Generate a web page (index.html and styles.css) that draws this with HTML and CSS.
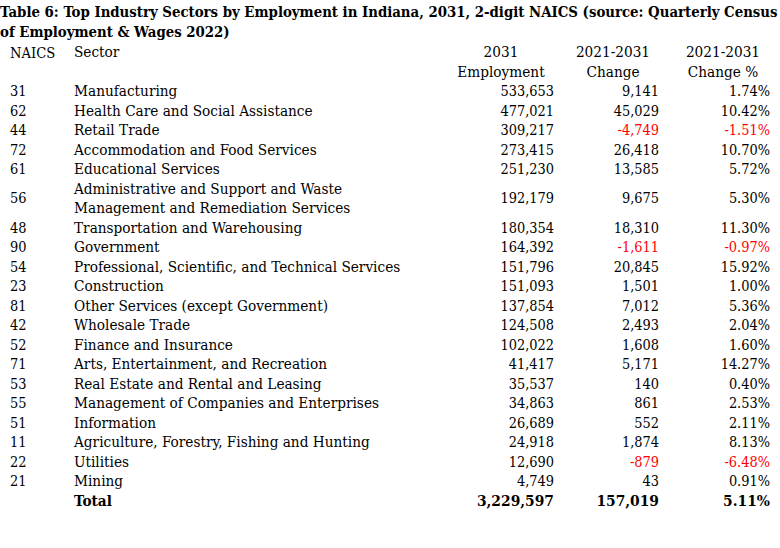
FILE: index.html
```html
<!DOCTYPE html>
<html>
<head>
<meta charset="utf-8">
<link rel="stylesheet" href="styles.css">
</head>
<body>
<div class="page">
<p class="caption"><span class="line">Table 6: Top Industry Sectors by Employment in Indiana, 2031, 2-digit NAICS (source: Quarterly Census</span> <span class="line">of Employment &amp; Wages 2022)</span></p>
<table class="data">
<colgroup>
<col class="c-code"><col class="c-sector"><col class="c-emp"><col class="c-chg"><col class="c-pct">
</colgroup>
<thead>
<tr><th class="code">NAICS</th><th class="sector">Sector</th><th class="num-h h-emp">2031<br>Employment</th><th class="num-h h-chg">2021-2031<br>Change</th><th class="num-h h-pct">2021-2031<br>Change %</th></tr>
</thead>
<tbody>
<tr><td class="code">31</td><td class="sector">Manufacturing</td><td class="num">533,653</td><td class="num">9,141</td><td class="num">1.74%</td></tr>
<tr><td class="code">62</td><td class="sector">Health Care and Social Assistance</td><td class="num">477,021</td><td class="num">45,029</td><td class="num">10.42%</td></tr>
<tr><td class="code">44</td><td class="sector">Retail Trade</td><td class="num">309,217</td><td class="num neg">-4,749</td><td class="num neg">-1.51%</td></tr>
<tr><td class="code">72</td><td class="sector">Accommodation and Food Services</td><td class="num">273,415</td><td class="num">26,418</td><td class="num">10.70%</td></tr>
<tr><td class="code">61</td><td class="sector">Educational Services</td><td class="num">251,230</td><td class="num">13,585</td><td class="num">5.72%</td></tr>
<tr><td class="code">56</td><td class="sector">Administrative and Support and Waste<br>Management and Remediation Services</td><td class="num">192,179</td><td class="num">9,675</td><td class="num">5.30%</td></tr>
<tr><td class="code">48</td><td class="sector">Transportation and Warehousing</td><td class="num">180,354</td><td class="num">18,310</td><td class="num">11.30%</td></tr>
<tr><td class="code">90</td><td class="sector">Government</td><td class="num">164,392</td><td class="num neg">-1,611</td><td class="num neg">-0.97%</td></tr>
<tr><td class="code">54</td><td class="sector">Professional, Scientific, and Technical Services</td><td class="num">151,796</td><td class="num">20,845</td><td class="num">15.92%</td></tr>
<tr><td class="code">23</td><td class="sector">Construction</td><td class="num">151,093</td><td class="num">1,501</td><td class="num">1.00%</td></tr>
<tr><td class="code">81</td><td class="sector">Other Services (except Government)</td><td class="num">137,854</td><td class="num">7,012</td><td class="num">5.36%</td></tr>
<tr><td class="code">42</td><td class="sector">Wholesale Trade</td><td class="num">124,508</td><td class="num">2,493</td><td class="num">2.04%</td></tr>
<tr><td class="code">52</td><td class="sector">Finance and Insurance</td><td class="num">102,022</td><td class="num">1,608</td><td class="num">1.60%</td></tr>
<tr><td class="code">71</td><td class="sector">Arts, Entertainment, and Recreation</td><td class="num">41,417</td><td class="num">5,171</td><td class="num">14.27%</td></tr>
<tr><td class="code">53</td><td class="sector">Real Estate and Rental and Leasing</td><td class="num">35,537</td><td class="num">140</td><td class="num">0.40%</td></tr>
<tr><td class="code">55</td><td class="sector">Management of Companies and Enterprises</td><td class="num">34,863</td><td class="num">861</td><td class="num">2.53%</td></tr>
<tr><td class="code">51</td><td class="sector">Information</td><td class="num">26,689</td><td class="num">552</td><td class="num">2.11%</td></tr>
<tr><td class="code">11</td><td class="sector">Agriculture, Forestry, Fishing and Hunting</td><td class="num">24,918</td><td class="num">1,874</td><td class="num">8.13%</td></tr>
<tr><td class="code">22</td><td class="sector">Utilities</td><td class="num">12,690</td><td class="num neg">-879</td><td class="num neg">-6.48%</td></tr>
<tr><td class="code">21</td><td class="sector">Mining</td><td class="num">4,749</td><td class="num">43</td><td class="num">0.91%</td></tr>
<tr class="total"><td class="code"></td><td class="sector">Total</td><td class="num">3,229,597</td><td class="num">157,019</td><td class="num">5.11%</td></tr>
</tbody>
</table>
</div>
</body>
</html>
```

FILE: styles.css
```css
html, body {
  margin: 0;
  padding: 0;
  background: #ffffff;
}
.page {
  width: 780px;
  font-family: "DejaVu Serif Condensed", "DejaVu Serif", serif;
  font-stretch: semi-condensed;
  color: #000000;
  padding-top: 2px;
}
.caption {
  margin: 0;
  font-weight: bold;
  font-size: 14.8px;
  line-height: 20px;
  white-space: nowrap;
}
.caption .line {
  display: block;
}
.data {
  border-collapse: collapse;
  table-layout: fixed;
  width: 770px;
  font-size: 15.2px;
  line-height: 19.5px;
  margin-top: 1px;
}
.c-code { width: 74px; }
.c-sector { width: 380px; }
.c-emp { width: 100px; }
.c-chg { width: 105px; }
.c-pct { width: 111px; }
.data th, .data td {
  padding: 0;
  font-weight: normal;
  vertical-align: middle;
  white-space: nowrap;
}
.data th { vertical-align: top; }
.data th.code {
  padding-left: 10px;
  text-align: left;
  font-size: 14.6px;
}
.data td.code {
  padding-left: 10px;
  text-align: left;
  font-size: 14.4px;
}
.sector { text-align: left; }
.num {
  text-align: right;
  font-size: 14.4px;
}
.num-h { text-align: center; }
.data th.h-emp { padding-right: 6px; }
.data th.h-chg { padding-left: 13px; }
.data th.h-pct { padding-left: 17px; }
.neg { color: #ff0000; }
.data .total td { font-weight: bold; }
.data .total td.num { font-size: 15.4px; }
```
